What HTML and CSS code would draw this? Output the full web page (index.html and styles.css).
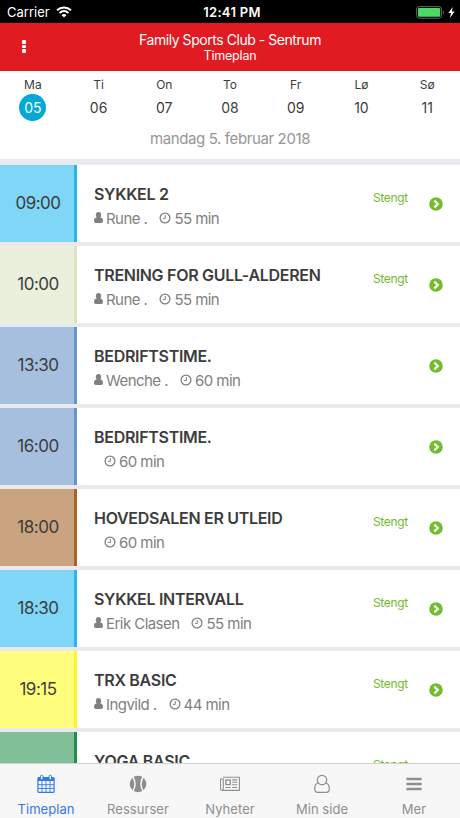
FILE: index.html
```html
<!DOCTYPE html>
<html lang="no">
<head>
    <meta charset="UTF-8">
    <meta name="viewport" content="width=device-width, initial-scale=1.0">
    <title>Timeplan</title>
    <link rel="stylesheet" href="styles.css">
</head>
<body>
    <!-- Shared icons -->
    <svg class="icon-defs" width="0" height="0">
        <symbol id="icon-user" viewBox="0 0 10 12">
            <path d="M5 0C3.200 0 2 1.400 2 3.300 2 4.400 2.400 5.300 3 5.900 1 5.900 0 7.400 0 9.900 0 11.300.8 12 2 12H8c1.200 0 2-.7 2-2.100 0-2.500-1-4-3-4 .6-.6 1-1.500 1-2.600C8 1.400 6.800 0 5 0Z" fill="currentColor"/>
        </symbol>
        <symbol id="icon-clock" viewBox="0 0 12 12">
            <circle cx="6" cy="6" r="4.900" fill="none" stroke="currentColor" stroke-width="1.300"/>
            <path d="M6.300 3.100V6.400H3.900" fill="none" stroke="currentColor" stroke-width="1"/>
        </symbol>
        <symbol id="icon-arrow" viewBox="0 0 14 14">
            <circle cx="7" cy="7" r="6.800" fill="currentColor"/>
            <path d="M5.300 3.600 8.800 7 5.300 10.400" fill="none" stroke="#fff" stroke-width="2.200"/>
        </symbol>
    </svg>

    <div class="app">
        <div class="status-bar">
            <div class="carrier">
                <span>Carrier</span>
                <svg class="wifi" viewBox="0 0 16 12">
                    <path d="M1 4.300C5 .6 11 .6 15 4.300M3.500 7C6.200 4.600 9.800 4.600 12.500 7" fill="none" stroke="#fff" stroke-width="2"/>
                    <path d="M5.500 8.900C7 7.600 9 7.600 10.500 8.900L8 11.500Z" fill="#fff"/>
                </svg>
            </div>
            <div class="clock">12:41 PM</div>
            <div class="power">
                <svg class="battery" viewBox="0 0 29 13">
                    <rect x=".6" y=".6" width="25" height="11.600" rx="2.600" fill="none" stroke="#666" stroke-width="1"/>
                    <rect x="2" y="2" width="22.200" height="8.800" rx="1.300" fill="#4cd964"/>
                    <path d="M27 4.500C28.300 5 28.300 8 27 8.500Z" fill="#666"/>
                </svg>
                <svg class="bolt" viewBox="0 0 7 11"><path d="M4.700 0 .4 6H3L1.900 11 6.600 4.500H3.900Z" fill="#fff"/></svg>
            </div>
        </div>

        <div class="header">
            <div class="menu-dots"><i></i><i></i><i></i></div>
            <div class="header-title">
                <h1>Family Sports Club - Sentrum</h1>
                <p>Timeplan</p>
            </div>
        </div>

        <div class="week">
            <div class="day active"><span>Ma</span><b>05</b></div>
            <div class="day"><span>Ti</span><b>06</b></div>
            <div class="day"><span>On</span><b>07</b></div>
            <div class="day"><span>To</span><b>08</b></div>
            <div class="day"><span>Fr</span><b>09</b></div>
            <div class="day"><span>Lø</span><b>10</b></div>
            <div class="day"><span>Sø</span><b>11</b></div>
        </div>
        <div class="date"><span>mandag 5. februar 2018</span></div>

        <div class="schedule">
            <div class="session">
                <div class="time sky">09:00</div>
                <div class="info">
                    <h2>SYKKEL 2</h2>
                    <p><svg class="user"><use href="#icon-user"/></svg><span class="name">Rune .</span><svg class="duration"><use href="#icon-clock"/></svg><span>55 min</span></p>
                </div>
                <div class="status">Stengt</div>
                <svg class="arrow"><use href="#icon-arrow"/></svg>
            </div>
            <div class="session">
                <div class="time sand">10:00</div>
                <div class="info">
                    <h2>TRENING FOR GULL-ALDEREN</h2>
                    <p><svg class="user"><use href="#icon-user"/></svg><span class="name">Rune .</span><svg class="duration"><use href="#icon-clock"/></svg><span>55 min</span></p>
                </div>
                <div class="status">Stengt</div>
                <svg class="arrow"><use href="#icon-arrow"/></svg>
            </div>
            <div class="session">
                <div class="time blue">13:30</div>
                <div class="info">
                    <h2>BEDRIFTSTIME.</h2>
                    <p><svg class="user"><use href="#icon-user"/></svg><span class="name">Wenche .</span><svg class="duration"><use href="#icon-clock"/></svg><span>60 min</span></p>
                </div>
                <svg class="arrow"><use href="#icon-arrow"/></svg>
            </div>
            <div class="session">
                <div class="time blue">16:00</div>
                <div class="info">
                    <h2>BEDRIFTSTIME.</h2>
                    <p><svg class="duration"><use href="#icon-clock"/></svg><span>60 min</span></p>
                </div>
                <svg class="arrow"><use href="#icon-arrow"/></svg>
            </div>
            <div class="session">
                <div class="time brown">18:00</div>
                <div class="info">
                    <h2>HOVEDSALEN ER UTLEID</h2>
                    <p><svg class="duration"><use href="#icon-clock"/></svg><span>60 min</span></p>
                </div>
                <div class="status">Stengt</div>
                <svg class="arrow"><use href="#icon-arrow"/></svg>
            </div>
            <div class="session">
                <div class="time sky">18:30</div>
                <div class="info">
                    <h2>SYKKEL INTERVALL</h2>
                    <p><svg class="user"><use href="#icon-user"/></svg><span class="name">Erik Clasen</span><svg class="duration"><use href="#icon-clock"/></svg><span>55 min</span></p>
                </div>
                <div class="status">Stengt</div>
                <svg class="arrow"><use href="#icon-arrow"/></svg>
            </div>
            <div class="session">
                <div class="time yellow">19:15</div>
                <div class="info">
                    <h2>TRX BASIC</h2>
                    <p><svg class="user"><use href="#icon-user"/></svg><span class="name">Ingvild .</span><svg class="duration"><use href="#icon-clock"/></svg><span>44 min</span></p>
                </div>
                <div class="status">Stengt</div>
                <svg class="arrow"><use href="#icon-arrow"/></svg>
            </div>
            <div class="session">
                <div class="time green"></div>
                <div class="info">
                    <h2>YOGA BASIC</h2>
                </div>
                <div class="status">Stengt</div>
            </div>
        </div>

        <div class="tabs">
            <div class="tab active">
                <svg viewBox="0 0 20 20" fill="none" stroke="currentColor">
                    <rect x="1.900" y="3.600" width="16.200" height="14.800" rx="1" stroke-width="1.200"/>
                    <path d="M2 4H18V7H2Z" fill="currentColor" stroke="none"/>
                    <path d="M2 10.700H18M2 14.500H18M6 7V18M10 7V18M14 7V18" stroke-width=".9"/>
                    <g fill="#f7f7f7" stroke-width="1"><rect x="4.500" y="1.200" width="2.400" height="4.400" rx="1.200"/><rect x="13.100" y="1.200" width="2.400" height="4.400" rx="1.200"/></g>
                    <path d="M8.500 3.600H11.500" stroke-width="1.200"/>
                </svg>
                <span>Timeplan</span>
            </div>
            <div class="tab">
                <svg viewBox="0 0 20 20">
                    <circle cx="10" cy="10" r="8.300" fill="currentColor"/>
                    <path d="M4.700 2.700C7.800 7 7.800 13 4.700 17.300M15.300 2.700C12.200 7 12.200 13 15.300 17.300" fill="none" stroke="#f7f7f7" stroke-width="1.500"/>
                </svg>
                <span>Ressurser</span>
            </div>
            <div class="tab">
                <svg viewBox="0 0 20 20" fill="none" stroke="currentColor" stroke-width="1.100">
                    <path d="M3.300 3.200H19.400V16.400H2.200C1.200 16.400.5 15.800.5 14.700V5H3.300V14.800C3.300 15.800 3 16.400 2.200 16.400"/>
                    <rect x="5.900" y="6" width="4.400" height="4.600" stroke-width="1.300"/>
                    <path d="M12.200 5.900H17.300M12.200 8.300H17.300M12.200 10.700H17.300M5.300 13.500H10.800M12.200 13.500H17.300"/>
                </svg>
                <span>Nyheter</span>
            </div>
            <div class="tab">
                <svg viewBox="0 0 20 20" fill="none" stroke="currentColor" stroke-width="1.200">
                    <circle cx="10" cy="6" r="4.700"/>
                    <path d="M6.200 9C3.800 9.600 2.700 11.700 2.700 14.700 2.700 17 3.700 18.300 5.600 18.300H14.400C16.300 18.300 17.300 17 17.300 14.700 17.300 11.700 16.200 9.600 13.800 9"/>
                </svg>
                <span>Min side</span>
            </div>
            <div class="tab">
                <svg viewBox="0 0 20 20"><path d="M2.400 5H17.600M2.400 10H17.600M2.400 15H17.600" stroke="currentColor" stroke-width="2.500"/></svg>
                <span>Mer</span>
            </div>
        </div>
    </div>
</body>
</html>
```
FILE: styles.css
```css
* {
    margin: 0;
    padding: 0;
    box-sizing: border-box;
}

body {
    background-color: #fff;
    color: #3c3c3c;
    font-family: Inter, Roboto, sans-serif;
}

.icon-defs {
    display: none;
}

.app {
    display: flex;
    flex-direction: column;
    width: 460px;
    height: 818px;
    overflow: hidden;
}

.status-bar {
    display: grid;
    grid-template-columns: 1fr auto 1fr;
    align-items: center;
    flex: none;
    height: 23px;
    padding: 1px 5px 0 7px;
    background: #000;
    color: #fff;
    font-size: 13px;
}

.carrier {
    display: flex;
    align-items: center;
    gap: 6px;
}

.wifi {
    width: 16px;
    height: 12px;
}

.clock {
    padding-left: 2px;
    font-weight: 600;
    letter-spacing: 0.3px;
}

.power {
    display: flex;
    align-items: center;
    justify-content: flex-end;
    gap: 3px;
}

.battery {
    width: 29px;
    height: 13px;
}

.bolt {
    width: 7px;
    height: 11px;
}

.header {
    display: grid;
    grid-template-columns: 60px 1fr 60px;
    align-items: center;
    flex: none;
    height: 48px;
    background: #e11b22;
    color: #fff;
}

.menu-dots {
    display: flex;
    flex-direction: column;
    gap: 1px;
    padding: 0 0 1px 22px;
}

.menu-dots i {
    width: 4px;
    height: 3.600px;
    border-radius: 1px;
    background: #fff;
}

.header-title {
    text-align: center;
}

.header-title h1 {
    font-size: 14px;
    font-weight: 400;
    line-height: 17px;
    letter-spacing: -0.45px;
}

.header-title p {
    font-size: 12.500px;
    line-height: 16px;
    letter-spacing: -0.2px;
}

.week {
    display: grid;
    grid-template-columns: repeat(7, 1fr);
    flex: none;
    height: 51px;
    padding-top: 6px;
}

.day {
    display: flex;
    flex-direction: column;
    align-items: center;
    font-size: 12px;
    line-height: 16px;
}

.day b {
    width: 27px;
    height: 27px;
    margin-top: 1px;
    border-radius: 50%;
    font-size: 14px;
    font-weight: 400;
    line-height: 27px;
    text-align: center;
}

.day.active b {
    background: #05a8d5;
    color: #fff;
}

.date {
    flex: none;
    height: 43px;
    padding-top: 7px;
    border-bottom: 6px solid #e9e9f0;
    color: #969696;
    font-size: 15px;
    line-height: 20px;
    letter-spacing: -0.38px;
    text-align: center;
}

.schedule {
    flex: 1;
    min-height: 0;
    overflow: hidden;
}

.session {
    display: flex;
    height: 81px;
    border-bottom: 4px solid #e9e9ee;
}

.time {
    display: flex;
    align-items: center;
    justify-content: center;
    flex: none;
    width: 77px;
    padding: 0 0 1px 2px;
    border-right: 3px solid;
    font-size: 17px;
    letter-spacing: -0.5px;
}

.sky {
    background: #7fd6f7;
    border-color: #29b6ee;
}

.sand {
    background: #ebf0dc;
    border-color: #dce4bd;
}

.blue {
    background: #a7bfdf;
    border-color: #6594cf;
}

.brown {
    background: #caa380;
    border-color: #aa632a;
}

.yellow {
    background: #ffff7d;
    border-color: #fbf72b;
}

.green {
    background: #80bf98;
    border-color: #21904b;
}

.info {
    flex: 1;
    padding: 18px 0 0 17px;
    white-space: nowrap;
}

.info h2 {
    font-size: 16px;
    font-weight: 600;
    line-height: 22px;
    letter-spacing: -0.3px;
}

.info p {
    display: flex;
    align-items: center;
    height: 20px;
    margin-top: 3px;
    color: #808080;
    font-size: 15px;
    letter-spacing: -0.55px;
}

.user {
    width: 9px;
    height: 11px;
    margin-right: 3px;
    margin-bottom: 1px;
}

.duration {
    width: 12px;
    height: 12px;
    margin: 0 3px 1px 12px;
}

.duration:first-child {
    margin-left: 10px;
}

.status {
    padding-top: 25px;
    color: #76b92e;
    font-size: 12px;
    line-height: 16px;
    letter-spacing: -0.3px;
}

.arrow {
    flex: none;
    width: 14px;
    height: 14px;
    margin: 32px 17px 0 21px;
    color: #72bd2d;
}

.status:last-child {
    padding-right: 52px;
}

.tabs {
    display: grid;
    grid-template-columns: repeat(5, 1fr);
    flex: none;
    height: 55px;
    border-top: 1px solid #d0d4cf;
    background: #f7f7f7;
}

.tab {
    display: flex;
    flex-direction: column;
    align-items: center;
    padding-top: 10px;
    color: #8e8e8e;
    font-size: 13px;
    line-height: 18px;
    letter-spacing: 0.05px;
}

.tab.active {
    color: #3478ed;
}

.tab svg {
    width: 20px;
    height: 20px;
    margin-bottom: 6px;
}
```
